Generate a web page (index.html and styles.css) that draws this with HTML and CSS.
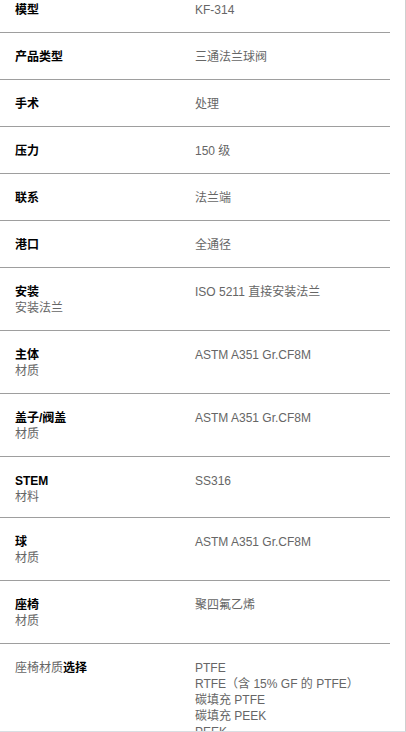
FILE: index.html
```html
<!DOCTYPE html>
<html lang="zh">
<head>
<meta charset="utf-8">
<title>规格</title>
<link rel="stylesheet" href="styles.css">
</head>
<body>
<div class="frame">
  <div class="specs">
    <div class="row"><div class="label"><b>模型</b></div><div class="value">KF-314</div></div>
    <div class="row"><div class="label"><b>产品类型</b></div><div class="value">三通法兰球阀</div></div>
    <div class="row"><div class="label"><b>手术</b></div><div class="value">处理</div></div>
    <div class="row"><div class="label"><b>压力</b></div><div class="value">150 级</div></div>
    <div class="row"><div class="label"><b>联系</b></div><div class="value">法兰端</div></div>
    <div class="row"><div class="label"><b>港口</b></div><div class="value">全通径</div></div>
    <div class="row"><div class="label"><b>安装</b><span class="sub">安装法兰</span></div><div class="value">ISO 5211 直接安装法兰</div></div>
    <div class="row"><div class="label"><b>主体</b><span class="sub">材质</span></div><div class="value">ASTM A351 Gr.CF8M</div></div>
    <div class="row"><div class="label"><b>盖子/阀盖</b><span class="sub">材质</span></div><div class="value">ASTM A351 Gr.CF8M</div></div>
    <div class="row row-tight"><div class="label"><b>STEM</b><span class="sub">材料</span></div><div class="value">SS316</div></div>
    <div class="row"><div class="label"><b>球</b><span class="sub">材质</span></div><div class="value">ASTM A351 Gr.CF8M</div></div>
    <div class="row"><div class="label"><b>座椅</b><span class="sub">材质</span></div><div class="value">聚四氟乙烯</div></div>
    <div class="row"><div class="label inline"><span class="inline-sub">座椅材质</span><b>选择</b></div><div class="value"><span class="line">PTFE</span><span class="line">RTFE（含 15% GF 的 PTFE）</span><span class="line">碳填充 PTFE</span><span class="line">碳填充 PEEK</span><span class="line">PEEK</span></div></div>
  </div>
</div>
</body>
</html>
```
FILE: styles.css
```css
html, body {
  margin: 0;
  padding: 0;
  background: #ffffff;
}
.frame {
  width: 405px;
  height: 731px;
  border-right: 1px solid #cfcfcf;
  border-bottom: 1px solid #d9dee3;
  overflow: hidden;
  font-family: "Liberation Sans", "Noto Sans CJK SC", sans-serif;
  font-size: 12px;
  line-height: 16px;
}
.specs {
  width: 390px;
  margin-top: -14px;
}
.row {
  display: grid;
  grid-template-columns: 195px 1fr;
  padding: 16px 0 14px;
  border-bottom: 1px solid #9e9e9e;
}
.row-tight {
  padding-bottom: 12px;
}
.label {
  padding-left: 15px;
  display: flex;
  flex-direction: column;
  align-items: flex-start;
}
.label.inline {
  flex-direction: row;
}
.label b {
  color: #000;
  font-weight: bold;
}
.label .sub,
.inline-sub {
  color: #666;
}
.value {
  color: #666;
  display: flex;
  flex-direction: column;
}
.line {
  display: block;
}
```
